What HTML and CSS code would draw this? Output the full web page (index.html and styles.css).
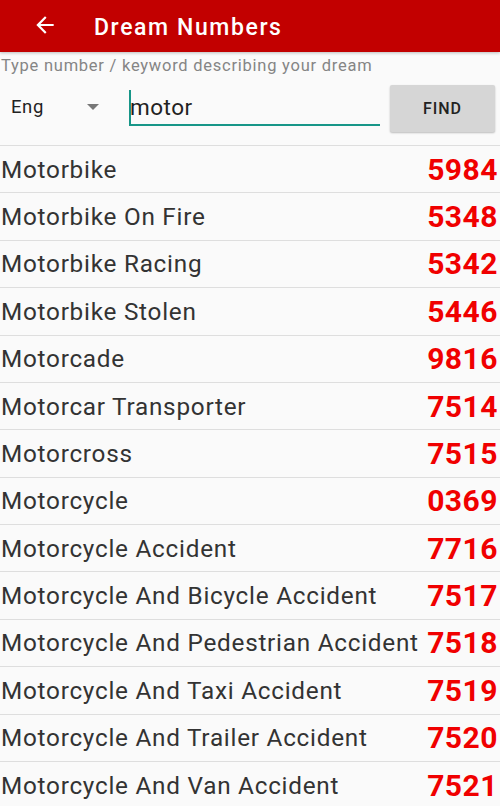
FILE: index.html
```html
<!DOCTYPE html>
<html>
<head>
<meta charset="utf-8">
<link rel="stylesheet" href="styles.css">
</head>
<body>
<div class="app">
  <header class="bar">
    <svg class="back" width="24" height="24" viewBox="0 0 24 24"><path d="M20 11H7.83l5.59-5.59L12 4l-8 8 8 8 1.41-1.41L7.83 13H20v-2z" fill="#fff"/></svg>
    <div class="title">Dream Numbers</div>
  </header>
  <div class="hint">Type number / keyword describing your dream</div>
  <div class="controls">
    <div class="spinner"><span class="lang">Eng</span><span class="tri"></span></div>
    <div class="input"><span class="caret"></span><span class="val">motor</span></div>
    <div class="btn">FIND</div>
  </div>
  <div class="list">
    <div class="row"><span class="name">Motorbike</span><span class="num">5984</span></div>
    <div class="row"><span class="name">Motorbike On Fire</span><span class="num">5348</span></div>
    <div class="row"><span class="name">Motorbike Racing</span><span class="num">5342</span></div>
    <div class="row"><span class="name">Motorbike Stolen</span><span class="num">5446</span></div>
    <div class="row"><span class="name">Motorcade</span><span class="num">9816</span></div>
    <div class="row"><span class="name">Motorcar Transporter</span><span class="num">7514</span></div>
    <div class="row"><span class="name">Motorcross</span><span class="num">7515</span></div>
    <div class="row"><span class="name">Motorcycle</span><span class="num">0369</span></div>
    <div class="row"><span class="name">Motorcycle Accident</span><span class="num">7716</span></div>
    <div class="row"><span class="name">Motorcycle And Bicycle Accident</span><span class="num">7517</span></div>
    <div class="row"><span class="name">Motorcycle And Pedestrian Accident</span><span class="num">7518</span></div>
    <div class="row"><span class="name">Motorcycle And Taxi Accident</span><span class="num">7519</span></div>
    <div class="row"><span class="name">Motorcycle And Trailer Accident</span><span class="num">7520</span></div>
    <div class="row"><span class="name">Motorcycle And Van Accident</span><span class="num">7521</span></div>
  </div>
</div>
</body>
</html>
```
FILE: styles.css
```css
* { box-sizing: border-box; }
html, body { margin: 0; padding: 0; }
body {
  width: 500px;
  height: 806px;
  overflow: hidden;
  background: #fafafa;
  font-family: Roboto, "Liberation Sans", sans-serif;
}
.bar {
  height: 52px;
  background: #c20000;
  display: flex;
  align-items: center;
  padding-left: 32px;
  box-shadow: 0 1px 3px rgba(0,0,0,0.25);
  position: relative;
  z-index: 1;
}
.back { width: 26px; height: 26px; margin-top: -2px; }
.title {
  margin-left: 36px;
  margin-top: 2px;
  color: #fff;
  font-size: 23px;
  font-weight: 500;
  letter-spacing: 1.6px;
}
.hint {
  margin-top: 4px;
  padding-left: 1px;
  color: #858585;
  font-size: 16.5px;
  letter-spacing: 0.75px;
  line-height: 20px;
}
.controls {
  display: flex;
  align-items: center;
  margin-top: 2px;
  border-bottom: 1px solid #dedede;
  padding-bottom: 10px;
  height: 68px;
}
.spinner {
  width: 129px;
  display: flex;
  align-items: center;
  padding-left: 11px;
}
.lang { font-size: 18.5px; color: #222; width: 76px; letter-spacing: 0.6px; }
.tri {
  width: 0; height: 0;
  border-left: 6px solid transparent;
  border-right: 6px solid transparent;
  border-top: 6px solid #777;
}
.input {
  width: 251px;
  height: 44px;
  border-bottom: 2px solid #179688;
  display: flex;
  align-items: center;
  position: relative;
  margin-top: -6px;
}
.caret {
  width: 2px;
  height: 34px;
  background: #179688;
  position: absolute;
  left: 0;
  top: 8px;
}
.val { font-size: 22.5px; color: #222; margin-left: 1px; margin-top: 9px; letter-spacing: 0.5px; }
.btn {
  margin-left: 10px;
  margin-top: 4px;
  width: 105px;
  height: 47px;
  background: #d6d6d6;
  border-radius: 2px;
  box-shadow: 0 1px 2px rgba(0,0,0,0.25);
  display: flex;
  align-items: center;
  justify-content: center;
  font-size: 16px;
  font-weight: 500;
  color: #222;
  letter-spacing: 1px;
}
.list { display: flex; flex-direction: column; }
.row {
  height: 47.38px;
  border-bottom: 1px solid #dedede;
  display: flex;
  align-items: center;
  justify-content: space-between;
  padding: 0 2px 0 1px;
}
.name { font-size: 24.3px; color: #333; letter-spacing: 0.75px; }
.num { font-size: 30px; font-weight: 700; color: #f00000; letter-spacing: 0.5px; }
```
